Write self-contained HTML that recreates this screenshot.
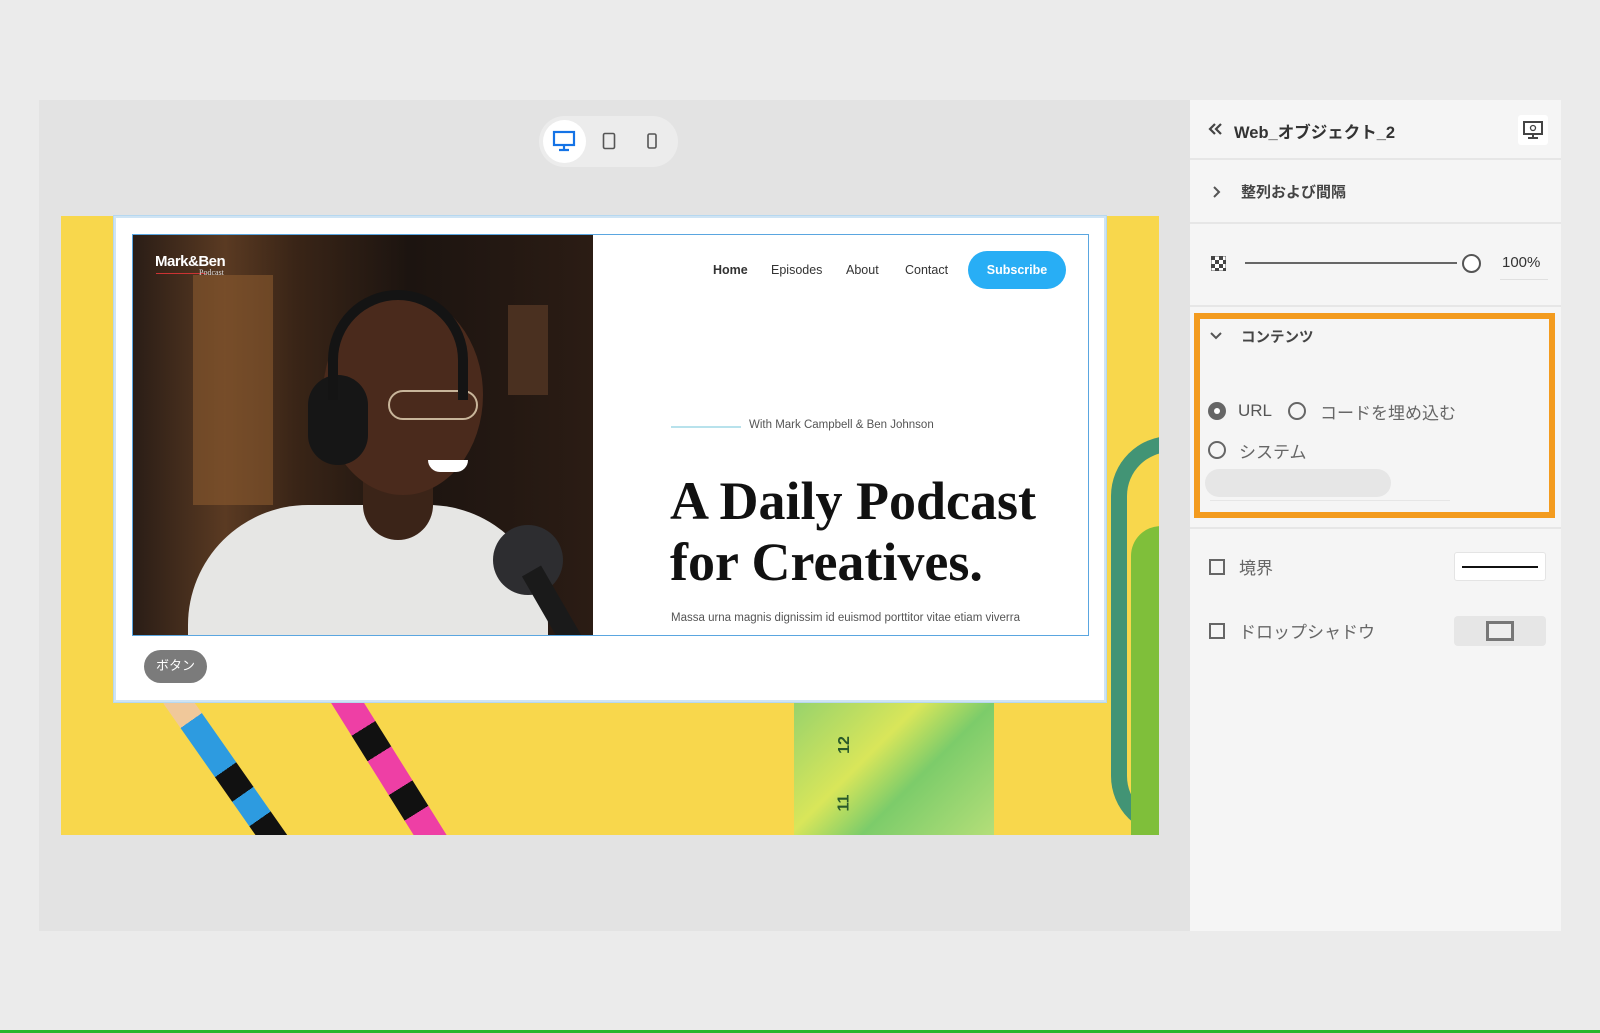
<!DOCTYPE html>
<html><head><meta charset="utf-8">
<style>
*{margin:0;padding:0;box-sizing:border-box}
body{width:1600px;height:1033px;background:#ebebeb;position:relative;overflow:hidden;font-family:"Liberation Sans","Noto Sans CJK JP",sans-serif}
.abs{position:absolute}
.jp{font-family:"Liberation Sans","Noto Sans CJK JP",sans-serif}
.serif{font-family:"Liberation Serif","Noto Serif CJK SC",serif}
</style></head><body>
<div class="abs" style="left:39px;top:100px;width:1151px;height:831px;background:#e3e3e3"></div>
<div class="abs" style="left:539px;top:116px;width:139px;height:51px;border-radius:26px;background:#ececec"></div>
<div class="abs" style="left:543px;top:120px;width:43px;height:43px;border-radius:50%;background:#fff"></div>
<svg class="abs" style="left:552px;top:130px" width="24" height="22" viewBox="0 0 24 22"><rect x="2" y="2" width="20" height="13" fill="none" stroke="#1473e6" stroke-width="2.2"/><path d="M12 15v4M7 20h10" stroke="#1473e6" stroke-width="2.2"/></svg>
<svg class="abs" style="left:602px;top:132px" width="14" height="18" viewBox="0 0 14 18"><rect x="1.5" y="1.5" width="11" height="15" rx="1.5" fill="none" stroke="#555" stroke-width="1.6"/></svg>
<svg class="abs" style="left:647px;top:133px" width="10" height="16" viewBox="0 0 10 16"><rect x="1" y="1" width="8" height="14" rx="1.5" fill="none" stroke="#555" stroke-width="1.6"/></svg>

<div class="abs" style="left:61px;top:216px;width:1098px;height:619px;background:#f8d74c;overflow:hidden">
  <div class="abs" style="left:1050px;top:220px;width:110px;height:400px;border-radius:60px 0 0 60px;border:16px solid #2f8d7a;border-right:none;opacity:.9"></div>
  <div class="abs" style="left:1070px;top:310px;width:40px;height:320px;background:#7fbf3a;border-radius:30px 0 0 0"></div>
  <div class="abs" style="left:100px;top:480px;width:26px;height:200px;background:linear-gradient(#f0c89a 0 15%,#2d9be0 15% 45%,#111 45% 60%,#2d9be0 60% 75%,#111 75%);transform:rotate(-35deg);transform-origin:top"></div>
  <div class="abs" style="left:262px;top:470px;width:28px;height:200px;background:linear-gradient(#ee3fa5 0 25%,#111 25% 40%,#ee3fa5 40% 60%,#111 60% 75%,#ee3fa5 75%);transform:rotate(-32deg);transform-origin:top"></div>
  <div class="abs" style="left:733px;top:470px;width:200px;height:160px;background:linear-gradient(135deg,#8fd06e,#d9e65a 40%,#7ccc6a 60%,#b9e07a)"></div>
  <div class="abs" style="left:775px;top:520px;font-size:16px;font-weight:bold;color:#2a5a2a;transform:rotate(-90deg)">12</div>
  <div class="abs" style="left:775px;top:578px;font-size:16px;font-weight:bold;color:#2a5a2a;transform:rotate(-90deg)">11</div>
</div>

<div class="abs" style="left:114px;top:216px;width:992px;height:486px;background:#fff;border:2px solid #cfe4f4;box-shadow:0 0 0 1px #b6d8f0"></div>
<div class="abs" style="left:132px;top:234px;width:957px;height:402px;border:1.5px solid #5aa6e0;background:#fff;overflow:hidden">
  <div class="abs" style="left:0;top:0;width:460px;height:402px;background:linear-gradient(90deg,#2a1d16 0%,#5a3a22 20%,#3a2517 35%,#1c1410 60%,#2b1c14 100%)">
    <div class="abs" style="left:60px;top:40px;width:80px;height:230px;background:#8a5a2e;opacity:.6"></div>
    <div class="abs" style="left:375px;top:70px;width:40px;height:90px;background:#4a3020"></div>
    <div class="abs" style="left:55px;top:270px;width:360px;height:170px;border-radius:120px 120px 0 0;background:#e6e6e4"></div>
    <div class="abs" style="left:230px;top:230px;width:70px;height:75px;background:#3b2418;border-radius:0 0 40px 40px"></div>
    <div class="abs" style="left:190px;top:60px;width:160px;height:200px;border-radius:50%;background:#4a2a1c"></div>
    <div class="abs" style="left:255px;top:155px;width:90px;height:30px;border-radius:20px;border:2px solid #c8b59a"></div>
    <div class="abs" style="left:295px;top:225px;width:40px;height:12px;border-radius:0 0 20px 20px;background:#fff"></div>
    <div class="abs" style="left:175px;top:140px;width:60px;height:90px;border-radius:30px;background:#161616"></div>
    <div class="abs" style="left:195px;top:55px;width:140px;height:110px;border-radius:70px 70px 0 0;border:10px solid #141414;border-bottom:none"></div>
    <div class="abs" style="left:360px;top:290px;width:70px;height:70px;border-radius:50%;background:#2d2d30"></div>
    <div class="abs" style="left:410px;top:330px;width:22px;height:90px;background:#1a1a1a;transform:rotate(-30deg)"></div>
  </div>
  <div class="abs" style="left:22px;top:18px;color:#fff;font-size:15px;font-weight:bold;letter-spacing:-.5px">Mark&amp;Ben</div>
  <div class="abs" style="left:23px;top:38px;width:50px;height:1px;background:#c33"></div>
  <div class="abs serif" style="left:66px;top:33px;color:#ddd;font-size:8px">Podcast</div>
  <div class="abs" style="left:580px;top:28px;font-size:12.5px;color:#333;font-weight:bold">Home</div>
  <div class="abs" style="left:638px;top:28px;font-size:12.5px;color:#333">Episodes</div>
  <div class="abs" style="left:713px;top:28px;font-size:12.5px;color:#333">About</div>
  <div class="abs" style="left:772px;top:28px;font-size:12.5px;color:#333">Contact</div>
  <div class="abs" style="left:835px;top:16px;width:98px;height:38px;border-radius:19px;background:#28aef5;color:#fff;font-size:12.5px;font-weight:bold;text-align:center;line-height:38px">Subscribe</div>
  <div class="abs" style="left:538px;top:191px;width:70px;height:2px;background:#b8e2ec"></div>
  <div class="abs" style="left:616px;top:184px;font-size:11.5px;color:#555">With Mark Campbell &amp; Ben Johnson</div>
  <div class="abs serif" style="left:537px;top:236px;font-size:54px;line-height:61px;font-weight:bold;color:#111;letter-spacing:0">A Daily Podcast<br>for Creatives.</div>
  <div class="abs" style="left:538px;top:377px;font-size:11.5px;color:#555">Massa urna magnis dignissim id euismod porttitor vitae etiam viverra</div>
</div>
<div class="abs jp" style="left:144px;top:650px;width:63px;height:33px;border-radius:17px;background:#7b7b7b;color:#fff;font-size:13px;text-align:center;line-height:31px">ボタン</div>

<div class="abs" style="left:1190px;top:100px;width:371px;height:831px;background:#f5f5f5"></div>
<svg class="abs" style="left:1207px;top:122px" width="16" height="14" viewBox="0 0 16 14"><path d="M8 2L3 7l5 5M14 2L9 7l5 5" fill="none" stroke="#444" stroke-width="2.2"/></svg>
<div class="abs jp" style="left:1234px;top:119px;font-size:16.5px;color:#333;font-weight:bold">Web_オブジェクト_2</div>
<div class="abs" style="left:1518px;top:115px;width:30px;height:30px;background:#fff;border-radius:3px"></div>
<svg class="abs" style="left:1522px;top:119px" width="22" height="22" viewBox="0 0 22 22"><rect x="2" y="3" width="18" height="12" fill="none" stroke="#444" stroke-width="2"/><circle cx="11" cy="9" r="2.5" fill="none" stroke="#444" stroke-width="1.3"/><path d="M11 15v3M6 19h10" stroke="#444" stroke-width="2"/></svg>
<div class="abs" style="left:1190px;top:158px;width:371px;height:2px;background:#e6e6e6"></div>
<svg class="abs" style="left:1212px;top:185px" width="10" height="14"><path d="M2 2l5 5-5 5" fill="none" stroke="#555" stroke-width="2"/></svg>
<div class="abs jp" style="left:1241px;top:181px;font-size:15px;color:#444;font-weight:bold">整列および間隔</div>
<div class="abs" style="left:1190px;top:222px;width:371px;height:2px;background:#e6e6e6"></div>
<svg class="abs" style="left:1211px;top:256px" width="15" height="15"><rect width="15" height="15" fill="#fff" stroke="#555"/><path d="M0 0h4v4H0zM8 0h4v4H8zM4 4h4v4H4zM12 4h3v4h-3zM0 8h4v4H0zM8 8h4v4H8zM4 12h4v3H4zM12 12h3v3h-3z" fill="#444"/></svg>
<div class="abs" style="left:1245px;top:262px;width:212px;height:2px;background:#666"></div>
<div class="abs" style="left:1462px;top:254px;width:19px;height:19px;border-radius:50%;border:2px solid #555;background:#fff"></div>
<div class="abs" style="left:1502px;top:254px;font-size:15px;color:#333">100%</div>
<div class="abs" style="left:1500px;top:279px;width:48px;height:1px;background:#e0e0e0"></div>
<div class="abs" style="left:1190px;top:305px;width:371px;height:2px;background:#e6e6e6"></div>
<div class="abs" style="left:1194px;top:313px;width:361px;height:205px;border:6px solid #f39b1e"></div>
<svg class="abs" style="left:1209px;top:331px" width="14" height="10"><path d="M2 2l5 5 5-5" fill="none" stroke="#555" stroke-width="2"/></svg>
<div class="abs jp" style="left:1241px;top:326px;font-size:14.5px;color:#444;font-weight:bold">コンテンツ</div>
<div class="abs" style="left:1208px;top:402px;width:18px;height:18px;border-radius:50%;background:#666"></div>
<div class="abs" style="left:1214px;top:408px;width:6px;height:6px;border-radius:50%;background:#fff"></div>
<div class="abs" style="left:1238px;top:401px;font-size:17px;color:#555">URL</div>
<div class="abs" style="left:1288px;top:402px;width:18px;height:18px;border-radius:50%;border:2px solid #666"></div>
<div class="abs jp" style="left:1320px;top:399px;font-size:17px;color:#666">コードを埋め込む</div>
<div class="abs" style="left:1208px;top:441px;width:18px;height:18px;border-radius:50%;border:2px solid #666"></div>
<div class="abs jp" style="left:1239px;top:438px;font-size:17px;color:#666">システム</div>
<div class="abs" style="left:1205px;top:469px;width:186px;height:28px;border-radius:14px;background:#e6e6e6"></div>
<div class="abs" style="left:1210px;top:500px;width:240px;height:1px;background:#e6e6e6"></div>
<div class="abs" style="left:1190px;top:527px;width:371px;height:2px;background:#e6e6e6"></div>
<div class="abs" style="left:1209px;top:559px;width:16px;height:16px;border:2px solid #666"></div>
<div class="abs jp" style="left:1239px;top:554px;font-size:17px;color:#666">境界</div>
<div class="abs" style="left:1454px;top:552px;width:92px;height:29px;background:#fff;border:1px solid #e4e4e4;border-radius:3px"></div>
<div class="abs" style="left:1462px;top:566px;width:76px;height:2px;background:#111"></div>
<div class="abs" style="left:1209px;top:623px;width:16px;height:16px;border:2px solid #666"></div>
<div class="abs jp" style="left:1239px;top:618px;font-size:17px;color:#666">ドロップシャドウ</div>
<div class="abs" style="left:1454px;top:616px;width:92px;height:30px;background:#e6e6e6;border-radius:4px"></div>
<div class="abs" style="left:1486px;top:621px;width:28px;height:20px;border:3px solid #777;background:#eee"></div>
<div class="abs" style="left:0;top:1030px;width:1600px;height:3px;background:#2ab52a"></div>
</body></html>
